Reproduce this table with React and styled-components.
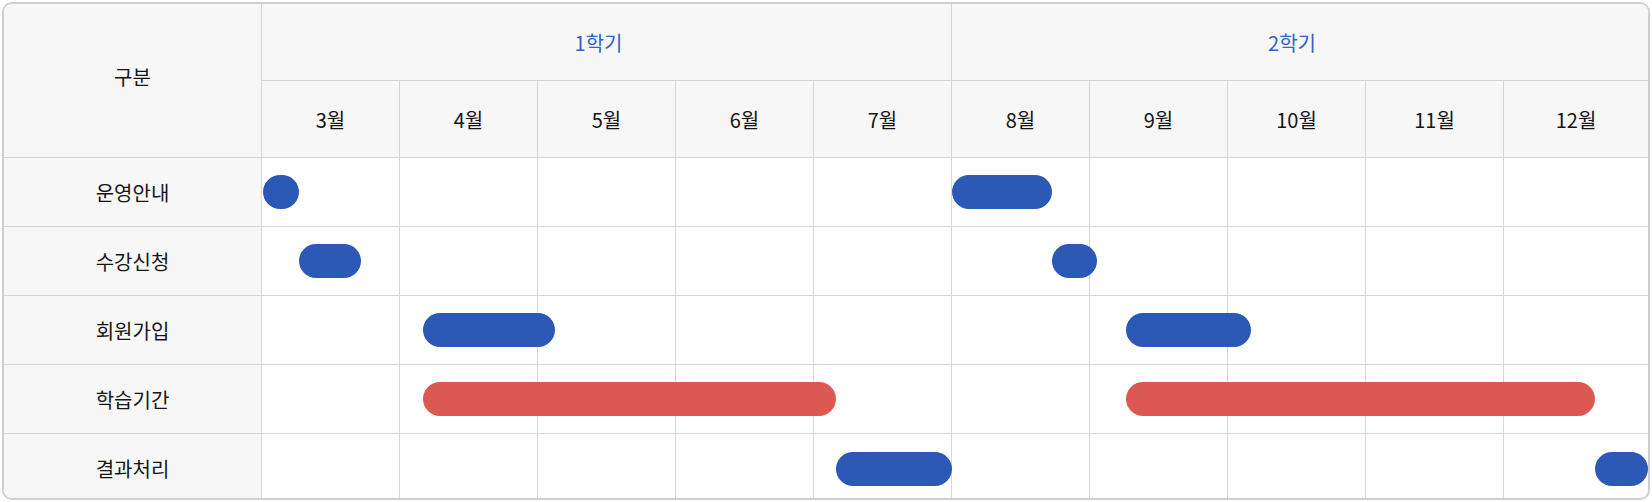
import React from "react";
import styled, { createGlobalStyle } from "styled-components";

const GlobalStyle = createGlobalStyle`
  html, body { margin: 0; padding: 0; background: #ffffff; }
  body {
    font-family: "Noto Sans CJK KR", "Noto Sans", "Liberation Sans", sans-serif;
    color: #151515;
  }
  * { box-sizing: border-box; }
`;

const COLS = "258px repeat(9, 138px) 1fr";
const TRACK_COLS = "repeat(9, 138px) 1fr";

const Page = styled.div`
  padding: 2px;
`;

const Table = styled.div`
  display: flex;
  flex-direction: column;
  width: 1648px;
  height: 498px;
  border: 2px solid #cfcfcf;
  border-radius: 10px;
  overflow: hidden;
  background: #ffffff;
`;

const Head = styled.div`
  display: grid;
  grid-template-columns: ${COLS};
  grid-template-rows: 77px 77px;
  background: #f7f7f7;
  flex: none;
`;

const Corner = styled.div`
  grid-row: 1 / span 2;
  grid-column: 1;
  display: flex;
  align-items: center;
  justify-content: center;
  font-size: 20px;
  border-right: 1px solid #d6d6d6;
  border-bottom: 1px solid #d6d6d6;
  padding-bottom: 8px;
`;

const Term = styled.div`
  grid-row: 1;
  grid-column: ${(p) => p.$span};
  display: flex;
  align-items: center;
  justify-content: center;
  font-size: 20px;
  color: #3360c2;
  padding-right: 16px;
  border-bottom: 1px solid #d6d6d6;
  border-right: ${(p) => (p.$last ? "none" : "1px solid #d6d6d6")};
`;

const Month = styled.div`
  grid-row: 2;
  display: flex;
  align-items: center;
  justify-content: center;
  font-size: 20px;
  color: #151515;
  border-bottom: 1px solid #d6d6d6;
  border-right: ${(p) => (p.$last ? "none" : "1px solid #d6d6d6")};
`;

const Row = styled.div`
  display: grid;
  grid-template-columns: ${COLS};
  height: 69px;
  flex: none;
  border-bottom: ${(p) => (p.$last ? "none" : "1px solid #d6d6d6")};
`;

const Label = styled.div`
  grid-column: 1;
  display: flex;
  align-items: center;
  justify-content: center;
  font-size: 20px;
  background: #f7f7f7;
  border-right: 1px solid #d6d6d6;
`;

const Track = styled.div`
  grid-column: 2 / -1;
  position: relative;
  display: grid;
  grid-template-columns: ${TRACK_COLS};
`;

const Cell = styled.div`
  border-right: ${(p) => (p.$last ? "none" : "1px solid #d6d6d6")};
`;

const Bar = styled.div`
  position: absolute;
  top: 50%;
  height: 34px;
  transform: translateY(-50%);
  border-radius: 17px;
  background: ${(p) => (p.$tone === "red" ? "#dc5953" : "#2b59b5")};
`;

const months = ["3월", "4월", "5월", "6월", "7월", "8월", "9월", "10월", "11월", "12월"];

const rows = [
  { label: "운영안내", bars: [[0.5, 37, "blue"], [690, 789.5, "blue"]] },
  { label: "수강신청", bars: [[37, 99, "blue"], [789.5, 835, "blue"]] },
  { label: "회원가입", bars: [[161, 293, "blue"], [863.5, 989, "blue"]] },
  { label: "학습기간", bars: [[161, 573.5, "red"], [863.5, 1333, "red"]] },
  { label: "결과처리", bars: [[574, 690, "blue"], [1333, 1386, "blue"]] },
];

export default function App() {
  return (
    <Page>
      <GlobalStyle />
      <Table>
        <Head>
          <Corner>구분</Corner>
          <Term $span="2 / span 5">1학기</Term>
          <Term $span="7 / span 5" $last>
            2학기
          </Term>
          {months.map((m, i) => (
            <Month key={m} $last={i === months.length - 1}>
              {m}
            </Month>
          ))}
        </Head>
        {rows.map((r, ri) => (
          <Row key={r.label} $last={ri === rows.length - 1}>
            <Label>{r.label}</Label>
            <Track>
              {months.map((m, i) => (
                <Cell key={m} $last={i === months.length - 1} />
              ))}
              {r.bars.map(([s, e, tone], bi) => (
                <Bar key={bi} $tone={tone} style={{ left: `${s}px`, width: `${e - s}px` }} />
              ))}
            </Track>
          </Row>
        ))}
      </Table>
    </Page>
  );
}
